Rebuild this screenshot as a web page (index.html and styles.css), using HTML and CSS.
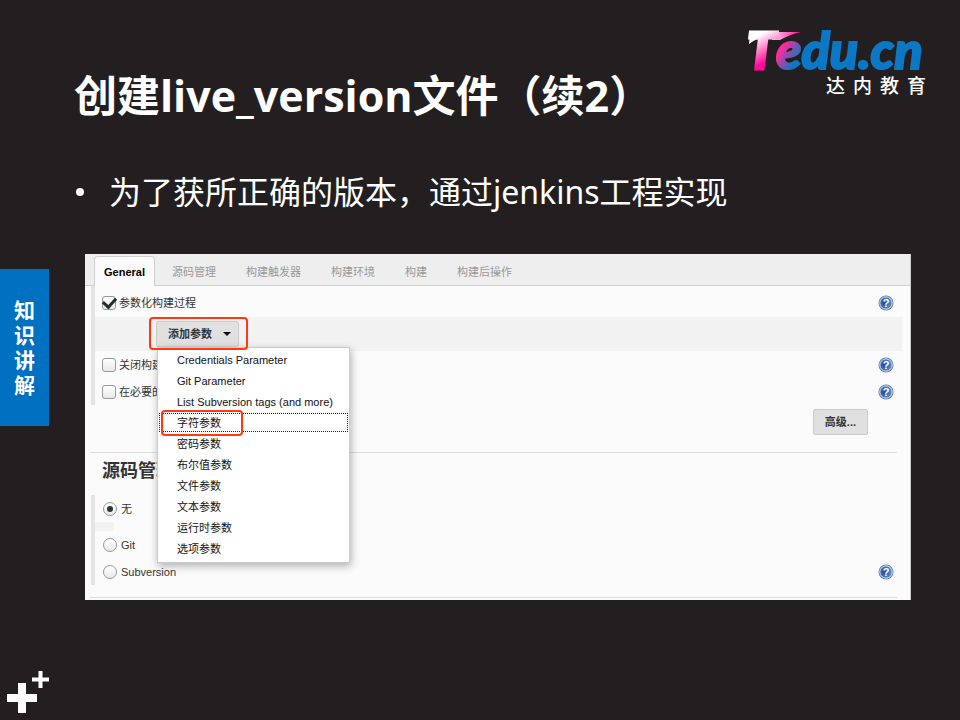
FILE: index.html
```html
<!DOCTYPE html>
<html lang="zh-CN">
<head>
<meta charset="utf-8">
<title>创建live_version文件（续2）</title>
<link rel="stylesheet" href="styles.css">
</head>
<body>
<svg class="defs" width="0" height="0" aria-hidden="true">
  <defs>
    <radialGradient id="orb" cx="0.35" cy="0.5" r="0.7">
      <stop offset="0" stop-color="#1f4a94"/>
      <stop offset="1" stop-color="#6f97cc"/>
    </radialGradient>
    <symbol id="help" viewBox="0 0 16 16">
      <circle cx="8" cy="8" r="7.5" fill="#4a74b0"/>
      <circle cx="8" cy="8" r="6.2" fill="url(#orb)" stroke="#dbe6f4" stroke-width="1"/>
      <text x="8" y="12" text-anchor="middle" class="help-mark">?</text>
    </symbol>
  </defs>
</svg>
<header class="slide-head">
  <h1>创建live_version文件（续2）</h1>
  <svg class="logo" viewBox="0 0 180 70" role="img" aria-label="Tedu.cn 达内教育">
    <defs>
      <linearGradient id="tee" gradientUnits="userSpaceOnUse" x1="8" y1="2" x2="26" y2="36">
        <stop offset="0.1" stop-color="#fff"/>
        <stop offset="0.8" stop-color="#ff0a9c"/>
      </linearGradient>
      <linearGradient id="swash" gradientUnits="userSpaceOnUse" x1="26" y1="0" x2="50" y2="0">
        <stop offset="0" stop-color="#ffc4e6"/>
        <stop offset="1" stop-color="#ff1fa0"/>
      </linearGradient>
      <linearGradient id="edu" gradientUnits="userSpaceOnUse" x1="29" y1="18" x2="53" y2="34">
        <stop offset="0.15" stop-color="#ff2a9c"/>
        <stop offset="0.8" stop-color="#0a78c4"/>
      </linearGradient>
    </defs>
    <path d="M24 2H53Q43 4 32 10H24Z" fill="url(#swash)"/>
    <path d="M2 2H10V9Q6 10 1 14Z" fill="#fff"/>
    <text class="logo-t" x="-1" y="39" fill="url(#tee)" stroke="url(#tee)">T</text>
    <text class="logo-name" x="28" y="39" fill="url(#edu)" stroke="url(#edu)">edu.cn</text>
    <text class="logo-cn" x="78 105 132 159" y="63">达内教育</text>
  </svg>
</header>
<ul class="points">
  <li>为了获所正确的版本，通过jenkins工程实现</li>
</ul>
<main class="stage">
  <aside class="chapter">知识讲解</aside>
  <section class="panel">
    <nav class="tabs">
      <a class="active" href="#general">General</a>
      <a href="#scm">源码管理</a>
      <a href="#triggers">构建触发器</a>
      <a href="#env">构建环境</a>
      <a href="#build">构建</a>
      <a href="#post">构建后操作</a>
    </nav>
    <div class="group" id="general">
      <div class="row first">
        <label><input type="checkbox" checked>参数化构建过程</label>
        <button class="help" aria-label="帮助"><svg><use href="#help"/></svg></button>
      </div>
      <div class="row shaded">
        <div class="adder">
          <button class="btn add">添加参数<i class="caret"></i></button>
          <span class="mark mark-add"></span>
          <ul class="menu">
            <li><button>Credentials Parameter</button></li>
            <li><button>Git Parameter</button></li>
            <li><button>List Subversion tags (and more)</button></li>
            <li class="focused"><button>字符参数</button><span class="mark mark-item"></span></li>
            <li><button>密码参数</button></li>
            <li><button>布尔值参数</button></li>
            <li><button>文件参数</button></li>
            <li><button>文本参数</button></li>
            <li><button>运行时参数</button></li>
            <li><button>选项参数</button></li>
          </ul>
        </div>
      </div>
      <div class="row">
        <label><input type="checkbox">关闭构建</label>
        <button class="help" aria-label="帮助"><svg><use href="#help"/></svg></button>
      </div>
      <div class="row">
        <label><input type="checkbox">在必要的</label>
        <button class="help" aria-label="帮助"><svg><use href="#help"/></svg></button>
      </div>
    </div>
    <div class="more"><button class="btn">高级...</button></div>
    <h2 id="scm">源码管理</h2>
    <div class="group">
      <div class="row"><label><input type="radio" name="scm" checked>无</label></div>
      <div class="sliver"></div>
      <div class="row"><label><input type="radio" name="scm">Git</label></div>
      <div class="row">
        <label><input type="radio" name="scm">Subversion</label>
        <button class="help" aria-label="帮助"><svg><use href="#help"/></svg></button>
      </div>
    </div>
    <hr>
  </section>
</main>
<footer class="slide-foot">
  <svg class="plus" viewBox="0 0 44 46" aria-hidden="true">
    <path d="M1 28H31M16 13V43" stroke="#fff" stroke-width="8"/>
    <path d="M26 9.500H43M34.500 1V18" stroke="#fff" stroke-width="4"/>
  </svg>
</footer>
</body>
</html>
```
FILE: styles.css
```css
* { box-sizing: border-box; }

body {
  margin: 0;
  min-height: 100vh;
  display: flex;
  flex-direction: column;
  background: #231f20;
  color: #fff;
  font-family: "Liberation Sans", "Noto Sans CJK SC", sans-serif;
}

button {
  font: inherit;
  color: inherit;
  border: 0;
  background: none;
  padding: 0;
}

ul { list-style: none; margin: 0; padding: 0; }

.defs { position: absolute; }

.slide-head {
  display: flex;
  justify-content: space-between;
  align-items: flex-start;
  padding: 30px 32px 0 74px;
}

h1 {
  margin: 36px 0 0;
  font: bold 43px/60px "Open Sans", "Noto Sans CJK SC", sans-serif;
}

.logo { width: 180px; height: 70px; flex: none; overflow: visible; }
.logo-t { font: italic 900 51px Lato, sans-serif; stroke-width: 3px; }
.logo-name { font: italic 900 52px Lato, sans-serif; stroke-width: 2px; }
.logo-cn { font: 500 19px "Noto Sans CJK SC", sans-serif; fill: #fff; }

.points {
  padding: 42px 40px 0 74px;
  font: 32px/48px "Noto Sans", "Noto Sans CJK SC", sans-serif;
}
.points li { display: flex; align-items: center; gap: 25px; }
.points li::before {
  content: "";
  flex: none;
  width: 8px;
  height: 8px;
  margin-left: 2px;
  border-radius: 50%;
  background: #fff;
}

.stage {
  display: flex;
  align-items: flex-start;
  gap: 36px;
  padding: 38px 49px 0 0;
}

.chapter {
  flex: none;
  width: 49px;
  margin-top: 15px;
  padding: 28px 14px 29px;
  background: #0070c0;
  font: bold 21px/25px "Noto Sans CJK SC", sans-serif;
  word-break: break-all;
}

.panel {
  flex: 1;
  background: #fbfbfb;
  border-right: 1px solid #ccc;
  color: #333;
  font-size: 11px;
  line-height: 16px;
}

.tabs {
  display: flex;
  align-items: flex-end;
  gap: 30px;
  height: 32px;
  padding-left: 9px;
  background: #eee;
  border-bottom: 1px solid #d0d0d0;
}
.tabs a { color: #999; text-decoration: none; padding-bottom: 5px; }
.tabs .active {
  margin: 0 -13px -1px 0;
  padding: 7px 9px 6px;
  border: 1px solid #d0d0d0;
  border-bottom: 0;
  border-radius: 4px 4px 0 0;
  background: #fbfbfb;
  color: #000;
  font-weight: bold;
}

.group { margin: 0 8px 0 6px; border-left: 4px solid #e4e4e4; }

.row {
  display: flex;
  align-items: center;
  justify-content: space-between;
  height: 27px;
  padding: 0 8px 0 7px;
}
.first { height: 31px; padding-top: 3px; }
.shaded { height: 34px; padding-left: 61px; background: #f2f2f2; }

label { display: flex; align-items: center; gap: 3px; }
input {
  appearance: none;
  width: 14px;
  height: 14px;
  margin: 0;
  border: 1px solid #999;
  border-radius: 3px;
  background: linear-gradient(#fff, #e9e9e9);
  display: grid;
  place-items: center;
}
input[type="checkbox"]:checked::before {
  content: "";
  width: 6px;
  height: 10px;
  margin-top: -3px;
  border: solid #222d30;
  border-width: 0 3px 3px 0;
  transform: rotate(42deg);
}
input[type="radio"] { border-radius: 50%; margin: 0 1px; }
input[type="radio"]:checked::before {
  content: "";
  width: 6px;
  height: 6px;
  border-radius: 50%;
  background: #2b3438;
}

.help, .help svg { display: block; width: 16px; height: 16px; }
.help-mark { font: bold 11px "Liberation Sans", sans-serif; fill: #fff; }

.btn {
  height: 26px;
  padding: 0 11px;
  border: 1px solid #ccc;
  border-radius: 2px;
  background: #e0e0e0;
  font-weight: bold;
}
.add { display: flex; align-items: center; gap: 11px; padding: 0 7px 0 11px; }
.caret {
  border: 4px solid transparent;
  border-top-color: #000;
  border-bottom: 0;
}

.adder { position: relative; }

.menu {
  position: absolute;
  z-index: 2;
  top: 26px;
  left: 1px;
  width: 193px;
  padding: 1px 1px 3px;
  border: 1px solid #ccc;
  background: #fff;
  box-shadow: 1px 3px 8px rgba(0, 0, 0, 0.3);
  color: #111;
}
.menu li { position: relative; height: 21px; padding: 1px 0; }
.menu button {
  display: block;
  width: 100%;
  height: 19px;
  padding-left: 17px;
  border: 1px dotted transparent;
  text-align: left;
  white-space: nowrap;
}
.menu .focused button { border-color: #222; }

.mark {
  position: absolute;
  border: 2px solid #ff3a12;
  border-radius: 4px;
  z-index: 3;
}
.mark-add { inset: -4px -9px -3px -7px; }
.mark-item { left: 2px; top: -2px; width: 82px; height: 26px; }

.more {
  display: flex;
  justify-content: flex-end;
  margin: 0 13px 0 5px;
  padding: 4px 29px 17px 0;
  border-bottom: 1px solid #ddd;
}

h2 { margin: 6px 0 12px 17px; font-size: 18px; line-height: 24px; }

.sliver { width: 19px; height: 9px; background: #f2f2f2; }

hr {
  margin: 12px 13px 2px 5px;
  border: 0;
  border-top: 1px solid #ddd;
}

.slide-foot { margin-top: auto; padding: 0 0 4px 6px; }
.plus { display: block; width: 44px; height: 46px; }
```
